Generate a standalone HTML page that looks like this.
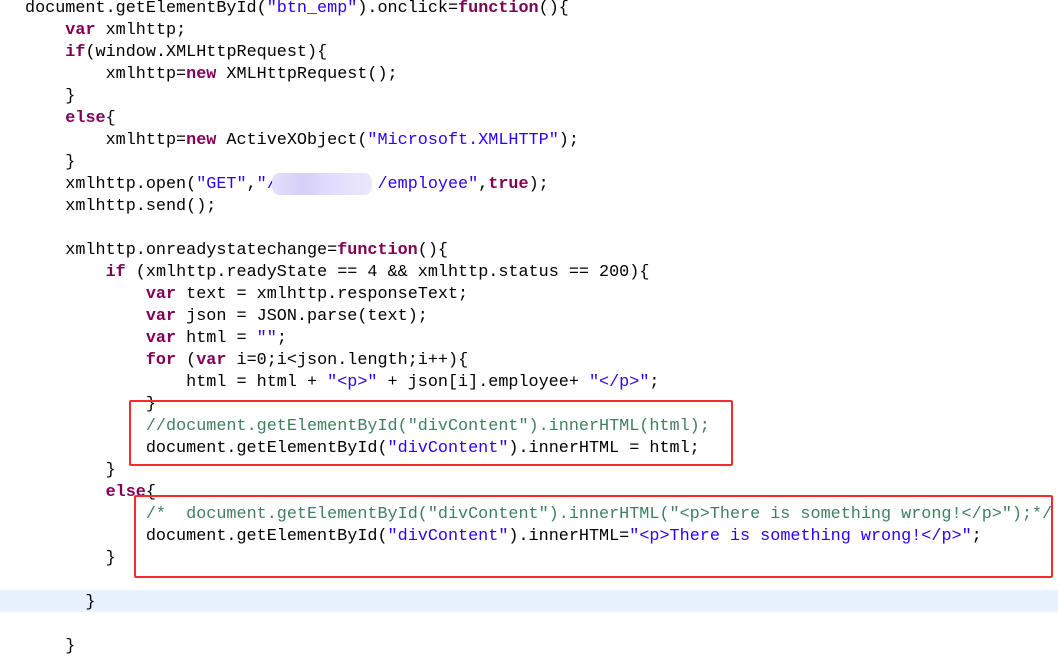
<!DOCTYPE html>
<html><head><meta charset="utf-8"><style>
html,body{margin:0;padding:0;background:#fff;width:1058px;height:659px;overflow:hidden;position:relative}
pre{position:absolute;left:25px;top:-2px;margin:0;font-family:"Liberation Mono",monospace;font-size:16.8px;line-height:22px;color:#000;z-index:2}
.k{color:#7f0055;font-weight:bold}.s{color:#2a00ff}.c{color:#3f7f5f}
.hl{position:absolute;left:0;top:590px;width:1058px;height:22px;background:#e8f2fe;z-index:1}
.box{position:absolute;border:2.5px solid #f52a2a;border-radius:2px;z-index:3}
.blur{position:absolute;left:272px;top:173px;width:100px;height:22px;background:linear-gradient(90deg,#e4e0fb,#d6cff8 30%,#e2ddfb 60%,#ebe8fc);border-radius:8px;z-index:4}
</style></head><body>
<div class="hl"></div>
<pre>document.getElementById(<span class="s">"btn_emp"</span>).onclick=<span class="k">function</span>(){
    <span class="k">var</span> xmlhttp;
    <span class="k">if</span>(window.XMLHttpRequest){
        xmlhttp=<span class="k">new</span> XMLHttpRequest();
    }
    <span class="k">else</span>{
        xmlhttp=<span class="k">new</span> ActiveXObject(<span class="s">"Microsoft.XMLHTTP"</span>);
    }
    xmlhttp.open(<span class="s">"GET"</span>,<span class="s">"/          /employee"</span>,<span class="k">true</span>);
    xmlhttp.send();

    xmlhttp.onreadystatechange=<span class="k">function</span>(){
        <span class="k">if</span> (xmlhttp.readyState == 4 &amp;&amp; xmlhttp.status == 200){
            <span class="k">var</span> text = xmlhttp.responseText;
            <span class="k">var</span> json = JSON.parse(text);
            <span class="k">var</span> html = <span class="s">""</span>;
            <span class="k">for</span> (<span class="k">var</span> i=0;i&lt;json.length;i++){
                html = html + <span class="s">"&lt;p&gt;"</span> + json[i].employee+ <span class="s">"&lt;/p&gt;"</span>;
            }
            <span class="c">//document.getElementById("divContent").innerHTML(html);</span>
            document.getElementById(<span class="s">"divContent"</span>).innerHTML = html;
        }
        <span class="k">else</span>{
            <span class="c">/*  document.getElementById("divContent").innerHTML("&lt;p&gt;There is something wrong!&lt;/p&gt;");*/</span>
            document.getElementById(<span class="s">"divContent"</span>).innerHTML=<span class="s">"&lt;p&gt;There is something wrong!&lt;/p&gt;"</span>;
        }

      }

    }</pre>
<div class="blur"></div>
<div class="box" style="left:129px;top:400px;width:600px;height:62px"></div>
<div class="box" style="left:134px;top:495px;width:915px;height:79px"></div>
</body></html>
